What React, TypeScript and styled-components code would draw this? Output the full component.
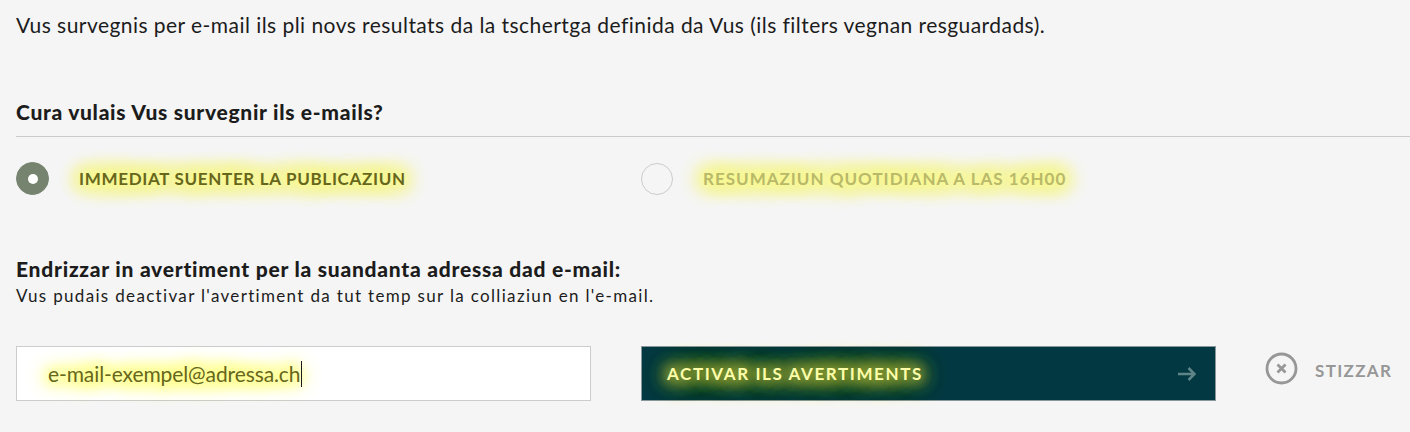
import React from 'react'
import styled, { createGlobalStyle, css } from 'styled-components'

const GlobalStyle = createGlobalStyle`
  html, body {
    margin: 0;
    background: #f5f5f5;
  }
  body {
    font-family: Lato, "Open Sans", "Liberation Sans", sans-serif;
    color: #1c1c1c;
  }
`

const glow = css`
  text-shadow:
    0 0 10px #f8f88c,
    0 0 13px #f8f88c,
    0 0 16px #f8f88c,
    0 0 18px #f8f88c,
    0 0 20px #f8f88c,
    0 0 22px #f8f88c,
    0 0 24px #f8f88c,
    0 0 26px #f8f88c,
    0 0 26px #f8f88c,
    0 0 28px #f8f88c;
`

const Page = styled.main`
  width: 1410px;
  height: 432px;
  overflow: hidden;
  padding: 12px 0 0 16px;
  box-sizing: border-box;
`

const Intro = styled.p`
  margin: 0;
  font-size: 21px;
  line-height: 26px;
  letter-spacing: 0.45px;
`

const Heading = styled.h2`
  margin: 61px 0 0;
  padding-bottom: 11px;
  border-bottom: 1px solid #cbcbcb;
  font-size: 21px;
  line-height: 26px;
  font-weight: 900;
  letter-spacing: 0.7px;
`

const Options = styled.div`
  display: grid;
  grid-template-columns: 625px 1fr;
  margin-top: 25px;
`

const Option = styled.label`
  display: flex;
  align-items: center;
  gap: 30px;
`

const Radio = styled.span<{ $checked?: boolean }>`
  flex: none;
  display: flex;
  align-items: center;
  justify-content: center;
  width: ${(p) => (p.$checked ? '33px' : '32px')};
  height: ${(p) => (p.$checked ? '33px' : '32px')};
  box-sizing: border-box;
  border-radius: 50%;
  background: ${(p) => (p.$checked ? '#76846f' : 'transparent')};
  border: 1px solid ${(p) => (p.$checked ? '#76846f' : '#cccccc')};

  &::after {
    content: '';
    display: ${(p) => (p.$checked ? 'block' : 'none')};
    width: 10px;
    height: 10px;
    border-radius: 50%;
    background: #fff;
  }
`

const OptionLabel = styled.span<{ $muted?: boolean }>`
  font-size: 17px;
  line-height: 20px;
  font-weight: 700;
  letter-spacing: ${(p) => (p.$muted ? '1px' : '0.68px')};
  color: ${(p) => (p.$muted ? '#b9b96a' : '#66661c')};
  ${glow}
`

const Subheading = styled.h3`
  margin: 61px 0 0;
  font-size: 21px;
  line-height: 26px;
  font-weight: 900;
  letter-spacing: 0.75px;
`

const Hint = styled.p`
  margin: 3px 0 0;
  font-size: 17px;
  line-height: 22px;
  letter-spacing: 1.33px;
`

const FormRow = styled.div`
  display: flex;
  align-items: center;
  margin-top: 39px;
`

const EmailBox = styled.div`
  flex: none;
  display: flex;
  align-items: center;
  width: 575px;
  height: 55px;
  box-sizing: border-box;
  margin-right: 50px;
  padding-left: 31px;
  background: #fff;
  border: 1px solid #cccccc;
`

const EmailText = styled.span`
  font-size: 21px;
  letter-spacing: -0.1px;
  color: #66661c;
  text-shadow:
    0 0 10px #fbfb80,
    0 0 13px #fbfb80,
    0 0 16px #fbfb80,
    0 0 18px #fbfb80,
    0 0 20px #fbfb80,
    0 0 23px #fbfb80,
    0 0 26px #fbfb80,
    0 0 28px #fbfb80;
`

const Caret = styled.span`
  width: 1px;
  height: 26px;
  margin-left: 1px;
  background: #1c1c1c;
`

const SubmitButton = styled.button`
  flex: none;
  display: flex;
  align-items: center;
  justify-content: space-between;
  width: 575px;
  height: 55px;
  box-sizing: border-box;
  padding: 0 19px 0 25px;
  background: #023842;
  border: 1px solid #87979b;
  font: inherit;
  font-size: 17px;
  font-weight: 700;
  letter-spacing: 1.6px;
  color: #fdfdaa;
  text-shadow:
    0 0 10px #8fa136,
    0 0 13px #8fa136,
    0 0 16px #8fa136,
    0 0 18px #8fa136,
    0 0 20px #8fa136,
    0 0 22px #8fa136,
    0 0 24px #8fa136,
    0 0 26px #8fa136,
    0 0 28px #8fa136;
`

const ArrowIcon = styled.svg`
  width: 18px;
  height: 14px;
  fill: none;
  stroke: #5f8488;
  stroke-width: 2.6;
`

const CancelButton = styled.button`
  display: flex;
  align-items: center;
  gap: 17px;
  margin: 0 0 7px 49px;
  padding: 0;
  background: none;
  border: none;
  font: inherit;
  font-size: 17px;
  font-weight: 700;
  letter-spacing: 1.34px;
  color: #979797;
`

const CancelIcon = styled.svg`
  width: 33px;
  height: 33px;
  margin-top: -4px;
  fill: none;
  stroke: #979797;
`

export default function App() {
  return (
    <Page>
      <GlobalStyle />
      <Intro>
        Vus survegnis per e-mail ils pli novs resultats da la tschertga definida da Vus (ils filters vegnan resguardads).
      </Intro>
      <Heading>Cura vulais Vus survegnir ils e-mails?</Heading>
      <Options>
        <Option>
          <Radio $checked />
          <OptionLabel>IMMEDIAT SUENTER LA PUBLICAZIUN</OptionLabel>
        </Option>
        <Option>
          <Radio />
          <OptionLabel $muted>RESUMAZIUN QUOTIDIANA A LAS 16H00</OptionLabel>
        </Option>
      </Options>
      <Subheading>Endrizzar in avertiment per la suandanta adressa dad e-mail:</Subheading>
      <Hint>Vus pudais deactivar l'avertiment da tut temp sur la colliaziun en l'e-mail.</Hint>
      <FormRow>
        <EmailBox>
          <EmailText>e-mail-exempel@adressa.ch</EmailText>
          <Caret />
        </EmailBox>
        <SubmitButton>
          ACTIVAR ILS AVERTIMENTS
          <ArrowIcon viewBox="0 0 18 14">
            <path d="M0 7h16.5M10.5 1l6 6-6 6" />
          </ArrowIcon>
        </SubmitButton>
        <CancelButton>
          <CancelIcon viewBox="0 0 33 33">
            <circle cx="16.5" cy="16.5" r="14.5" strokeWidth="2.8" />
            <path d="M12.5 12.5l8 8M20.5 12.5l-8 8" strokeWidth="2.8" />
          </CancelIcon>
          STIZZAR
        </CancelButton>
      </FormRow>
    </Page>
  )
}
